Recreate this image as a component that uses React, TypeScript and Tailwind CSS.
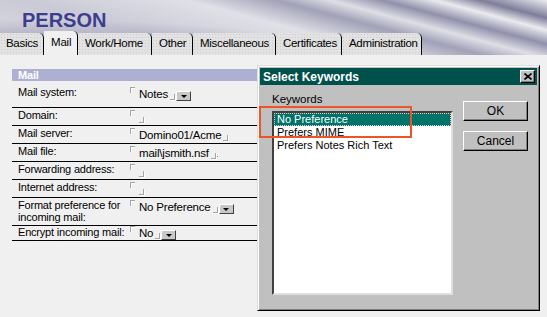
const headerBg =
  "bg-[#e0e0e7] bg-[radial-gradient(ellipse_at_0%_100%,rgba(125,125,155,0.95)_0%,rgba(145,145,172,0.55)_24%,rgba(230,230,236,0)_46%),linear-gradient(195deg,rgba(238,238,243,0.9)_0%,rgba(115,115,145,0.9)_9%,rgba(236,236,241,0.9)_15%,rgba(130,130,160,0.85)_22%,rgba(222,222,230,0.75)_29%,rgba(140,140,168,0.75)_36%,rgba(230,230,236,0)_48%,rgba(180,180,198,0.5)_70%,rgba(230,230,236,0)_100%)]";

const tabs = [
  { label: "Basics", w: "w-[44px] pl-[6px]" },
  { label: "Mail", w: "w-[34px] pl-[7px]", active: true },
  { label: "Work/Home", w: "w-[74px] pl-[7px]" },
  { label: "Other", w: "w-[41px] pl-[7px]" },
  { label: "Miscellaneous", w: "w-[83px] pl-[7px]" },
  { label: "Certificates", w: "w-[66px] pl-[7px]" },
  { label: "Administration", w: "w-[80px] pl-[7px]" },
];

function CornerTL() {
  return <span className="block h-[6px] w-[5px] shrink-0 border-l border-t border-[#a4a4a4] shadow-[inset_1px_1px_0_#ffffff]" />;
}

function CornerBR({ className = "" }: { className?: string }) {
  return (
    <span
      className={`block h-[6px] w-[5px] shrink-0 border-b border-r border-[#a4a4a4] shadow-[1px_1px_0_#ffffff] ${className}`}
    />
  );
}

function DropBtn() {
  return (
    <span className="ml-[1px] mt-[5px] flex h-[10px] w-[15px] shrink-0 items-center justify-center border border-b-[#404040] border-l-white border-r-[#404040] border-t-white bg-[#c8c8c8]">
      <span className="h-0 w-0 border-x-[3px] border-t-[3px] border-x-transparent border-t-black" />
    </span>
  );
}

type Field = {
  label: string[];
  value?: string;
  drop?: boolean;
  h: string;
  pt: string;
  vpt?: string;
  dot?: boolean;
};

const fields: Field[] = [
  { label: ["Mail system:"], value: "Notes", drop: true, h: "h-[27px]", pt: "pt-[5px]" },
  { label: ["Domain:"], h: "h-[18px]", pt: "pt-[1px]" },
  { label: ["Mail server:"], value: "Domino01/Acme", h: "h-[18px]", pt: "pt-[1px]" },
  { label: ["Mail file:"], value: "mail\\jsmith.nsf", dot: true, h: "h-[18px]", pt: "pt-[1px]" },
  { label: ["Forwarding address:"], h: "h-[18px]", pt: "pt-[1px]" },
  { label: ["Internet address:"], h: "h-[18px]", pt: "pt-[1px]" },
  { label: ["Format preference for", "incoming mail:"], value: "No Preference", drop: true, h: "h-[28px]", pt: "pt-[1px]" },
  { label: ["Encrypt incoming mail:"], value: "No", drop: true, h: "h-[15px]", pt: "pt-0", vpt: "-mt-[1px]" },
];

function Win95Button({ children }: { children: string }) {
  return (
    <div className="flex h-[20px] w-[65px] items-center justify-center border border-b-black border-l-white border-r-black border-t-white bg-[#c0c0c0] text-[12px] shadow-[inset_-1px_-1px_0_#808080]">
      {children}
    </div>
  );
}

export default function App() {
  return (
    <div className="relative h-[317px] w-[547px] overflow-hidden bg-[#f0f0f0] font-['Liberation_Sans',Arial,sans-serif] text-black">
      {/* banner + tabs */}
      <div className={`flex h-[55px] flex-col ${headerBg}`}>
        <div className="h-[32px] pl-[22px] pt-[10px] text-[20px] font-bold leading-[20px] text-[#3d3d8e]">PERSON</div>
        <div className="flex h-[23px] items-end">
          {tabs.map((t) =>
            t.active ? (
              <div
                key={t.label}
                className={`${t.w} flex h-[24px] items-center rounded-tr-[5px] border-r border-black bg-[#f0f0f0] pb-[1px] text-[11.5px] tracking-[-0.2px]`}
              >
                {t.label}
              </div>
            ) : (
              <div
                key={t.label}
                className={`${t.w} flex h-[22px] items-center rounded-tr-[5px] border-r border-black bg-[#e2e2e2] bg-[radial-gradient(circle,#cdcdcd_0.6px,transparent_0.8px)] bg-[length:3px_3px] text-[11.5px] tracking-[-0.3px]`}
              >
                {t.label}
              </div>
            )
          )}
        </div>
      </div>

      {/* Mail section */}
      <div className="ml-[12px] mt-[14px] w-[300px] text-[11px] tracking-[-0.2px]">
        <div className="h-[12px] bg-[#aeb0d3] pl-[6px] text-[11px] font-bold leading-[12px] text-white">Mail</div>
        {fields.map((f) => (
          <div key={f.label[0]} className={`flex border-b border-black ${f.h}`}>
            <div className={`w-[118px] shrink-0 pl-[6px] leading-[12px] ${f.pt}`}>
              {f.label.map((l) => (
                <div key={l}>{l}</div>
              ))}
            </div>
            <div className={`flex items-start ${f.label.length > 1 ? "pt-[1px]" : f.pt} ${f.vpt ?? ""}`}>
              <span className="mt-[1px]">
                <CornerTL />
              </span>
              {f.value ? (
                <>
                  <span className="ml-[4px] mt-[2px] text-[11.5px] leading-[13px]">{f.value}</span>
                  <CornerBR className="ml-[2px] mt-[8px]" />
                  {f.dot && <span className="ml-[1px] mt-[11px] block h-[1px] w-[1px] bg-[#808080]" />}
                  {f.drop && <DropBtn />}
                </>
              ) : (
                <CornerBR className="ml-[4px] mt-[8px]" />
              )}
            </div>
          </div>
        ))}
      </div>

      {/* Select Keywords dialog */}
      <div className="absolute left-[257px] top-[65px] flex h-[246px] w-[283px] flex-col border border-b-black border-l-[#dfdfdf] border-r-black border-t-[#dfdfdf] bg-[#c0c0c0] p-[2px] shadow-[inset_1px_1px_0_#ffffff,inset_-1px_-1px_0_#808080]">
        <div className="flex h-[17px] items-center justify-between bg-[#00514b] pl-[3px] pr-[2px]">
          <span className="text-[12px] font-bold text-white">Select Keywords</span>
          <span className="flex h-[13px] w-[15px] items-center justify-center border border-b-black border-l-white border-r-black border-t-white bg-[#c0c0c0] shadow-[inset_-1px_-1px_0_#808080]">
            <svg width="8" height="7" viewBox="0 0 8 7">
              <path d="M0.5 0.5 L7.5 6.5 M7.5 0.5 L0.5 6.5" stroke="black" strokeWidth="1.6" />
            </svg>
          </span>
        </div>
        <div className="flex flex-1 pl-[12px] pt-[8px]">
          <div className="flex flex-col">
            <div className="text-[11.5px] leading-[13px]">Keywords</div>
            <div className="mt-[5px] h-[184px] w-[181px] border-2 border-b-[#dfdfdf] border-l-[#404040] border-r-[#dfdfdf] border-t-[#404040] bg-white text-[11px] leading-[13px]">
              <div className="border border-dotted border-[#f2c6b8] bg-[#00736a] pl-[2px] leading-[11px] text-white">No Preference</div>
              <div className="pl-[3px]">Prefers MIME</div>
              <div className="pl-[3px]">Prefers Notes Rich Text</div>
            </div>
          </div>
          <div className="ml-[10px] mt-[8px] flex flex-col gap-[10px]">
            <Win95Button>OK</Win95Button>
            <Win95Button>Cancel</Win95Button>
          </div>
        </div>
      </div>

      {/* annotation */}
      <div className="absolute left-[259px] top-[106px] h-[32px] w-[153px] border-2 border-[#f05424]" />
    </div>
  );
}
